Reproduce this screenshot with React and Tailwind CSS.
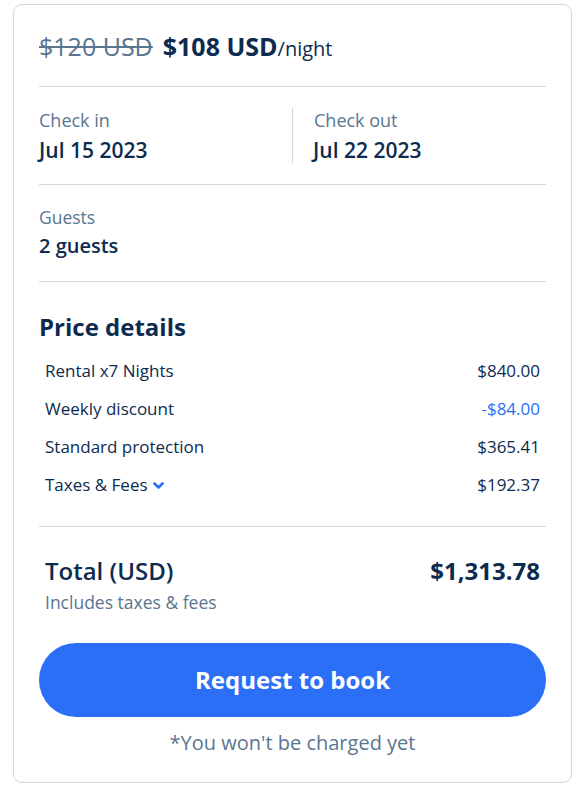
import React from "react";

function Row({ label, value, valueClass = "text-[#0d2b4f]", chevron }) {
  return (
    <div className="flex h-[38px] items-center justify-between px-[6px] text-[17px] text-[#0d2b4f]">
      <div className="flex items-center gap-[5px]">
        <span>{label}</span>
        {chevron && (
          <svg width="11" height="8" viewBox="0 0 11 8" className="mt-[2px]">
            <path d="M1.5 1.5 L5.5 5.5 L9.5 1.5" fill="none" stroke="#2b6ff7" strokeWidth="2.6" strokeLinecap="round" strokeLinejoin="round" />
          </svg>
        )}
      </div>
      <span className={valueClass}>{value}</span>
    </div>
  );
}

export default function App() {
  return (
    <div className="bg-white pt-[4px] pl-[13px] w-[584px] h-[794px]" style={{ fontFamily: "'Open Sans', sans-serif" }}>
      <div className="w-[559px] h-[779px] rounded-[9px] border border-[#cfd7e0] px-[25px]">
        <div className="flex items-baseline pt-[25px] h-[81px] leading-[32px]">
          <span className="text-[25px] text-[#5a7590] line-through decoration-[2px]">$120 USD</span>
          <span className="ml-[10px] text-[25px] font-bold text-[#0d2b4f]">$108 USD</span>
          <span className="text-[20px] text-[#0d2b4f]">/night</span>
        </div>
        <div className="h-px bg-[#cfd7e0]" />
        <div className="flex h-[97px] items-start pt-[21px]">
          <div className="w-[253px] flex flex-col">
            <span className="text-[18px] text-[#5a7590] leading-[24px]">Check in</span>
            <span className="mt-[6px] text-[21px] font-semibold text-[#0d2b4f] leading-[24px]">Jul 15 2023</span>
          </div>
          <div className="w-px h-[55px] bg-[#cfd7e0]" />
          <div className="flex-1 flex flex-col pl-[20px]">
            <span className="text-[18px] text-[#5a7590] leading-[24px] pl-[1px]">Check out</span>
            <span className="mt-[6px] text-[21px] font-semibold text-[#0d2b4f] leading-[24px]">Jul 22 2023</span>
          </div>
        </div>
        <div className="h-px bg-[#cfd7e0]" />
        <div className="flex flex-col h-[96px] pt-[20px]">
          <span className="text-[17.5px] text-[#5a7590] leading-[24px]">Guests</span>
          <span className="mt-[5px] text-[20px] font-semibold text-[#0d2b4f] leading-[24px]">2 guests</span>
        </div>
        <div className="h-px bg-[#cfd7e0]" />
        <div className="pt-[31px] text-[24px] font-bold text-[#0d2b4f] leading-[28px]">Price details</div>
        <div className="mt-[11px]">
          <Row label="Rental x7 Nights" value="$840.00" />
          <Row label="Weekly discount" value="-$84.00" valueClass="text-[#2b6ff7]" />
          <Row label="Standard protection" value="$365.41" />
          <Row label="Taxes & Fees" value="$192.37" chevron />
        </div>
        <div className="mt-[22px] h-px bg-[#cfd7e0]" />
        <div className="px-[6px] pt-[30px]">
          <div className="flex items-center justify-between text-[24px] text-[#0d2b4f] leading-[28px]">
            <span className="font-semibold">Total (USD)</span>
            <span className="font-bold">$1,313.78</span>
          </div>
          <div className="mt-[6px] text-[17.5px] text-[#5a7590] leading-[22px]">Includes taxes &amp; fees</div>
        </div>
        <button className="mt-[30px] w-full h-[74px] rounded-full bg-[#2b6ff7] text-white text-[24px] font-bold">
          Request to book
        </button>
        <div className="mt-[14px] text-center text-[20px] text-[#5a7590] leading-[24px]">*You won't be charged yet</div>
      </div>
    </div>
  );
}
